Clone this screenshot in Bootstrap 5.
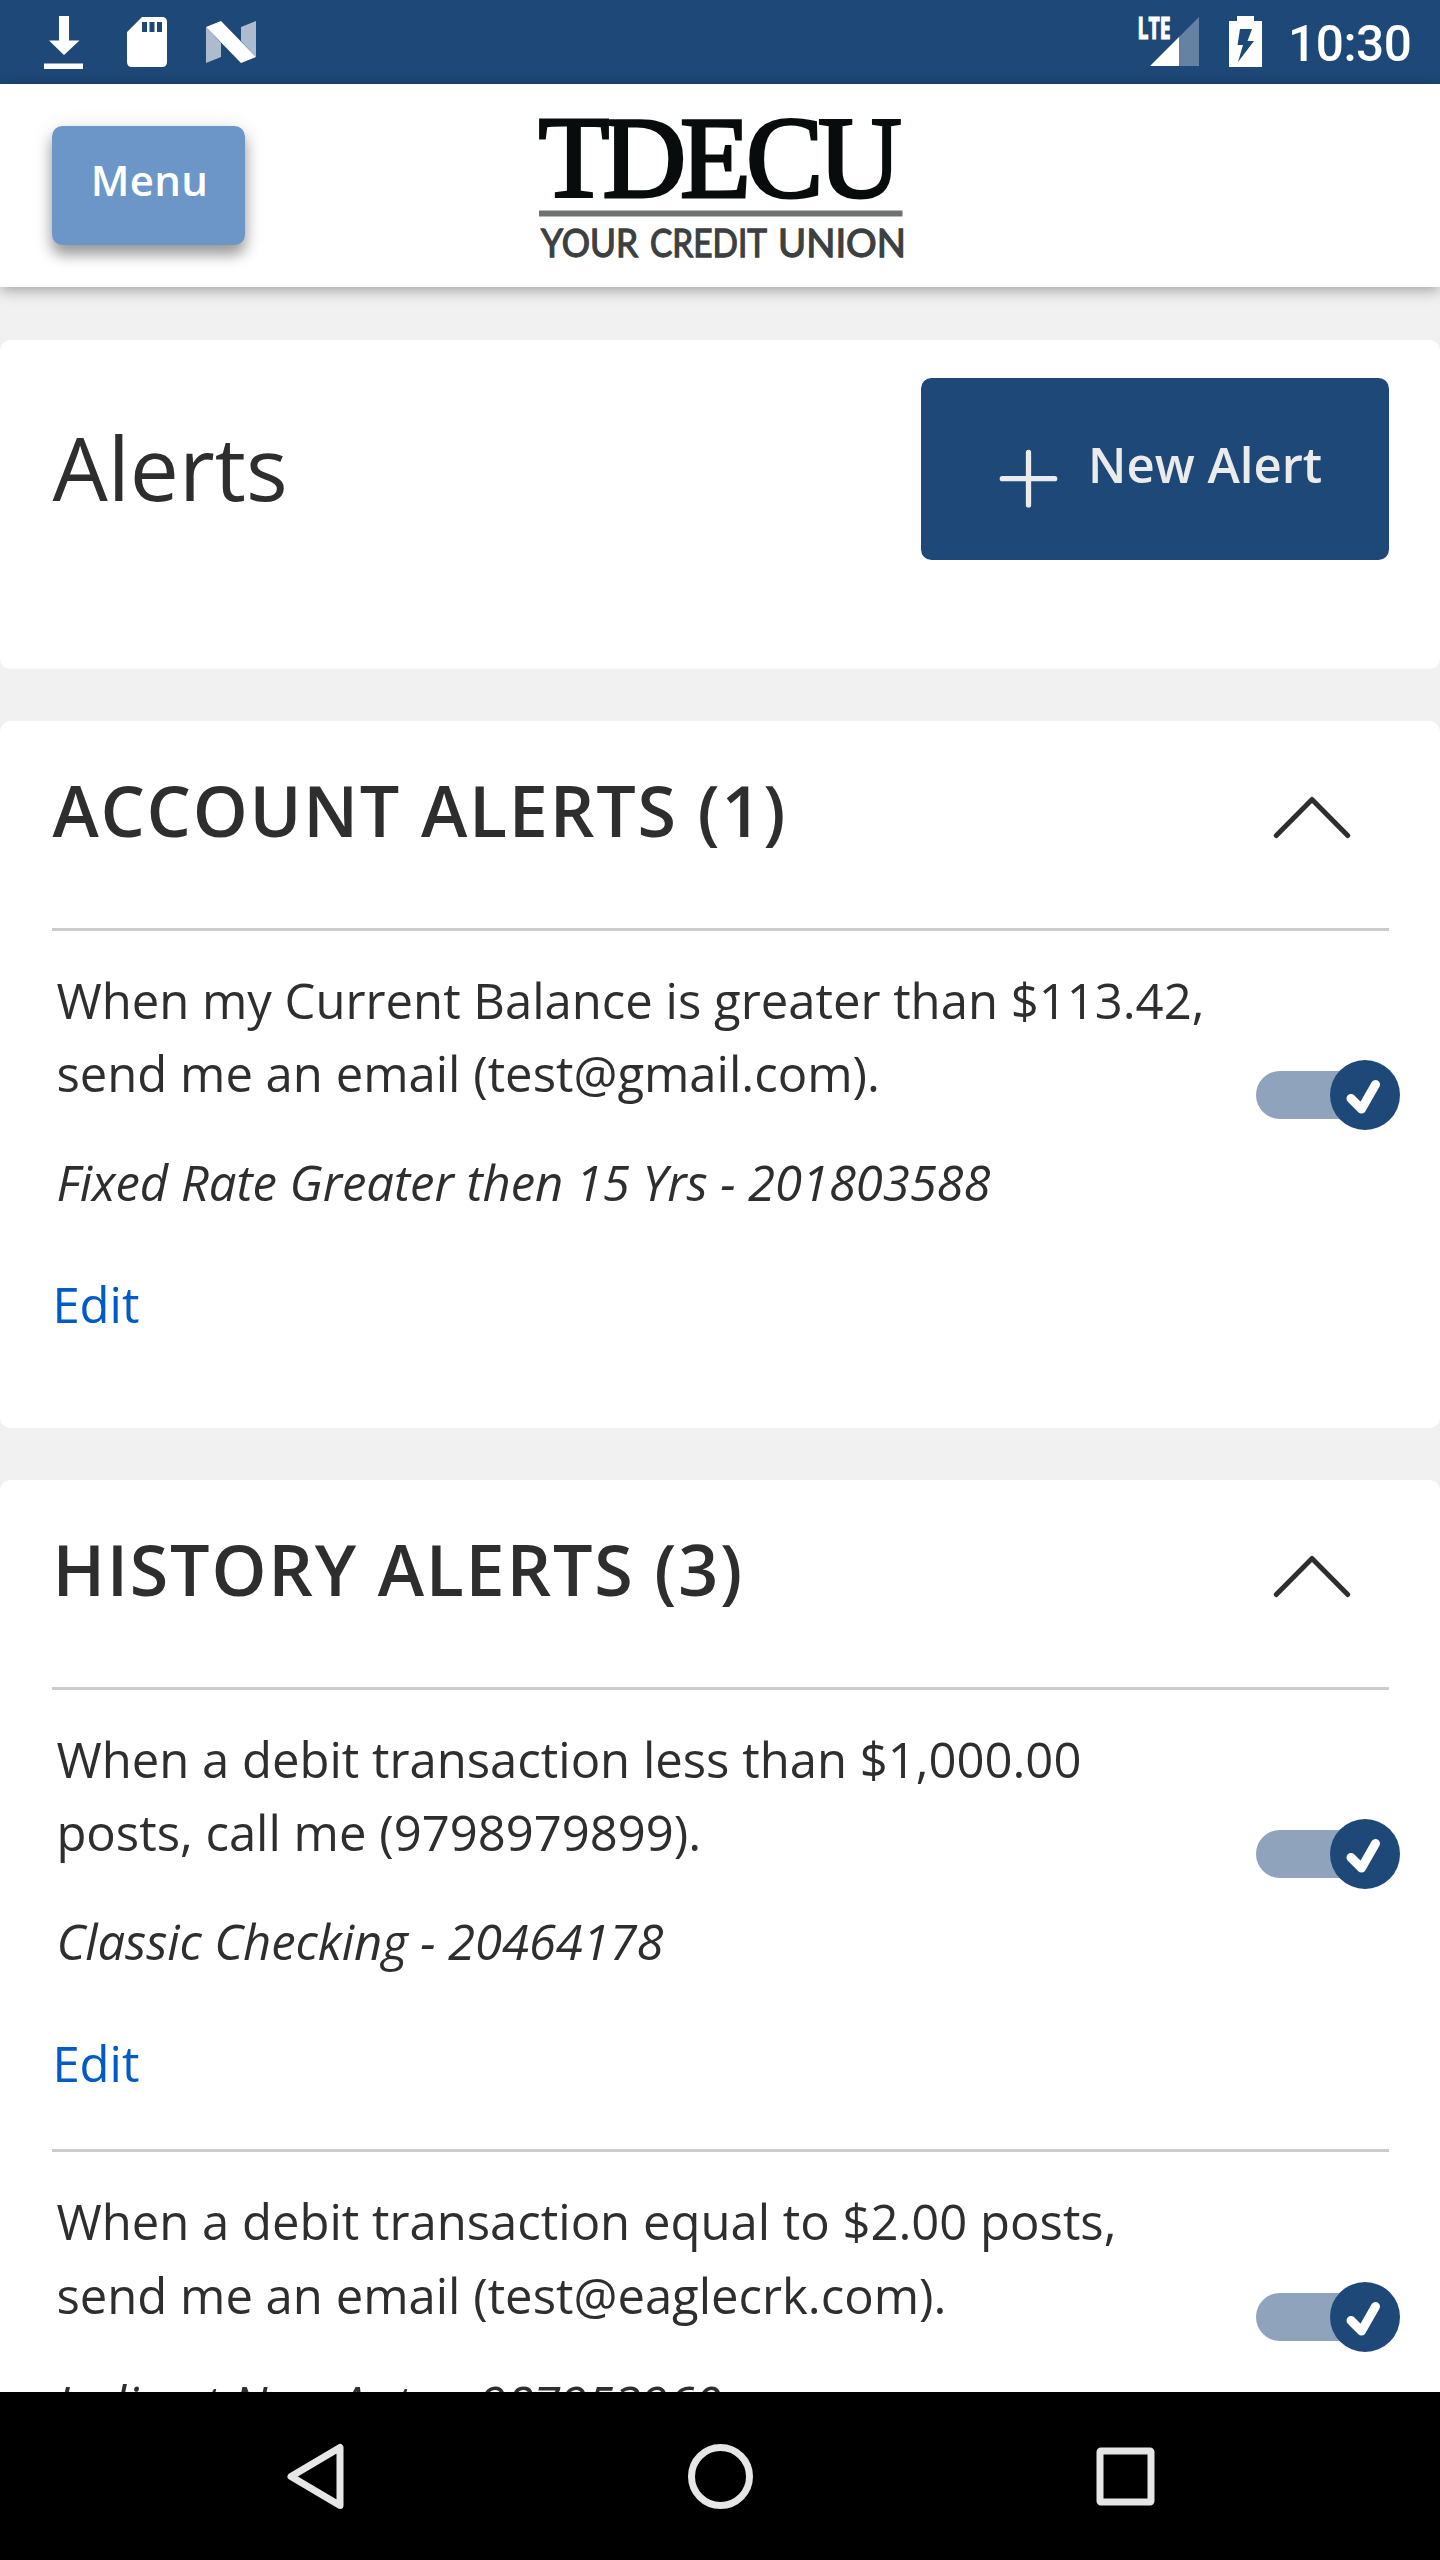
<!DOCTYPE html>
<html lang="en">
<head>
<meta charset="utf-8">
<meta name="viewport" content="width=device-width, initial-scale=1">
<title>Alerts</title>
<link href="https://cdn.jsdelivr.net/npm/bootstrap@5.3.0/dist/css/bootstrap.min.css" rel="stylesheet">
<style>
  html, body { height: 2560px; overflow: hidden; }
  body { font-family: "Open Sans", sans-serif; background: #f1f1f1; color: #2e2e2e; font-size: 49px; line-height: 73.5px; }
  svg { display: block; flex: none; }
  .status-bar { height: 84px; background: #1e4878; color: #fff; font-family: Roboto, sans-serif; }
  .clock { width: 152px; font-size: 49.5px; font-weight: 500; line-height: 88px; letter-spacing: -.4px; }
  .app-header { height: 203px; padding: 0 52px; background: #fff; box-shadow: 0 3px 14px rgba(0,0,0,.35); z-index: 1; }
  .btn-menu { width: 193px; height: 119px; margin-top: 42px; padding: 0 0 11px 2px; border: 0; border-radius: 10.5px; background: #6c96c8; color: #fff; font-size: 42px; font-weight: 600; letter-spacing: .3px; line-height: 108px; box-shadow: 0 10px 14px rgba(0,0,0,.35), 0 3px 22px rgba(0,0,0,.12); }
  .brand-art { margin-left: 284px; }
  .panel-card { border: 0; border-radius: 10.5px; background: #fff; color: inherit; padding: 0 52.4px; margin-top: 52.5px; }
  .title-card { height: 329px; }
  .page-title { font-size: 87.5px; font-weight: 400; line-height: 120px; margin: 67.5px 0 0; }
  .btn-new { width: 468.5px; height: 182px; margin: 38.5px -1.5px 0 0; border: 0; border-radius: 10.5px; background: #1e4878; color: #ebebeb; font-size: 49px; font-weight: 600; line-height: 74px; padding: 0; }
  .new-label { margin-top: 49px; }
  .section-head { height: 206.5px; }
  .section-head h2 { font-size: 70px; font-weight: 600; line-height: 96px; margin: 40.8px 0 0; letter-spacing: 1.75px; }
  .chevron-art { margin: 73.8px 35.2px 0 0; }
  .alert-item { border-top: 3.5px solid #ccc; height: 462.5px; margin-right: -1.5px; padding-top: 33.2px; }
  .alert-item.only-item { height: 500px; }
  .alert-item p { margin: 0 0 0 4px; }
  .alert-item .acct { font-style: italic; margin-top: 35px; letter-spacing: -.06px; }
  .edit-link { color: #005bc6; text-decoration: none; display: inline-block; margin-top: 48.8px; }
  .switch-art { margin: 96.8px -11px 0 0; }
  .nav-keys { height: 168px; background: #000; }
</style>
<script src="https://cdn.jsdelivr.net/npm/bootstrap@5.3.0/dist/js/bootstrap.bundle.min.js"></script>
</head>
<body class="d-flex flex-column">
<svg class="d-none" aria-hidden="true">
  <symbol id="toggle" viewBox="0 0 144 70">
    <path d="M24 11H110V59H24A24 24 0 0 1 24 11Z" fill="#8fa3bc"/>
    <circle cx="109" cy="35" r="35" fill="#1e4878"/>
    <path d="M95 38.5L105.500 49L119.500 24.500" fill="none" stroke="#fff" stroke-width="9" stroke-linecap="round" stroke-linejoin="round"/>
  </symbol>
  <symbol id="chevron" viewBox="0 0 80 44"><path d="M4.300 40.500L40 4.500L75.700 40.500" fill="none" stroke="#2e2e2e" stroke-width="5" stroke-linecap="round" stroke-linejoin="round"/></symbol>
</svg>

<div class="status-bar d-flex flex-shrink-0 justify-content-between">
  <svg width="280" height="84" fill="#fff" role="img" aria-label="Notifications">
    <path d="M59 16H69V40.500H79.500L64 55L49 40.500H59ZM44 63.500H83V69H44Z"/>
    <path fill-rule="evenodd" d="M142 17H162Q167 17 167 22V62Q167 67 162 67H132Q127 67 127 62V32ZM142 22V32H147V22ZM149.500 22V32H154.500V22ZM157 22V32H162V22Z"/>
    <path d="M206 27L221 43V57L206 63ZM241 27L256 21V57L241 41Z" opacity=".63"/>
    <path d="M206 27L221 21L256 57L241 63Z"/>
  </svg>
  <div class="d-flex">
    <svg width="150" height="84" fill="#fff" role="img" aria-label="LTE signal, battery charging">
      <text x="-.5" y="39" font-family="Open Sans" font-size="29.500" font-weight="700" stroke="#fff" stroke-width="1.200" textLength="33" lengthAdjust="spacingAndGlyphs">LTE</text>
      <path d="M12 66L41 37V66Z"/><path d="M41 37L61 17V66H41Z" opacity=".32"/>
      <path fill-rule="evenodd" d="M99 16H116V21H124V67H91V21H99ZM102 29L99.500 45H105L100 62L116 41H109.500L114 29Z"/>
    </svg>
    <div class="clock">10:30</div>
  </div>
</div>

<header class="app-header d-flex flex-shrink-0 position-relative">
  <button class="btn btn-menu" type="button">Menu</button>
  <svg class="brand-art" width="384" height="203" viewBox="-10 0 384 203" role="img" aria-label="TDECU Your Credit Union">
    <text x="-.5 63.500 141 207 279" y="113" font-family="Liberation Serif" font-size="116" fill="#080c0d" stroke="#080c0d" stroke-width="3">TDECU</text>
    <path d="M0 126.500H363.500V132.500H0Z" fill="#707272"/>
    <g font-family="Lato" font-size="38.500" fill="#3c4040" stroke="#3c4040" stroke-width="1.300">
      <text x="2" y="173" textLength="97" lengthAdjust="spacingAndGlyphs">YOUR</text>
      <text x="111" y="173" textLength="117" lengthAdjust="spacingAndGlyphs">CREDIT</text>
      <text x="239" y="173" textLength="128" lengthAdjust="spacingAndGlyphs">UNION</text>
    </g>
  </svg>
</header>

<main class="flex-grow-1 overflow-hidden">
  <section class="card panel-card title-card d-flex flex-row justify-content-between align-items-start">
    <h1 class="page-title">Alerts</h1>
    <button class="btn btn-new d-flex" type="button">
      <svg width="167.500" height="182" aria-hidden="true"><path d="M81.300 100.700H133.700M107.500 74.500V126.900" stroke="#ebebeb" stroke-width="5.300" stroke-linecap="round"/></svg>
      <span class="new-label">New Alert</span>
    </button>
  </section>

  <section class="card panel-card">
    <div class="section-head d-flex justify-content-between">
      <h2>ACCOUNT ALERTS (1)</h2>
      <svg class="chevron-art" width="80" height="44" aria-hidden="true"><use href="#chevron"/></svg>
    </div>
    <article class="alert-item only-item d-flex justify-content-between">
      <div>
        <p>When my Current Balance is greater than $113.42,<br>send me an email (test@gmail.com).</p>
        <p class="acct">Fixed Rate Greater then 15 Yrs - 201803588</p>
        <a href="#" class="edit-link">Edit</a>
      </div>
      <svg class="switch-art" width="144" height="70" role="img" aria-label="On"><use href="#toggle"/></svg>
    </article>
  </section>

  <section class="card panel-card">
    <div class="section-head d-flex justify-content-between">
      <h2>HISTORY ALERTS (3)</h2>
      <svg class="chevron-art" width="80" height="44" aria-hidden="true"><use href="#chevron"/></svg>
    </div>
    <article class="alert-item d-flex justify-content-between">
      <div>
        <p>When a debit transaction less than $1,000.00<br>posts, call me (9798979899).</p>
        <p class="acct">Classic Checking - 20464178</p>
        <a href="#" class="edit-link">Edit</a>
      </div>
      <svg class="switch-art" width="144" height="70" role="img" aria-label="On"><use href="#toggle"/></svg>
    </article>
    <article class="alert-item d-flex justify-content-between">
      <div>
        <p>When a debit transaction equal to $2.00 posts,<br>send me an email (test@eaglecrk.com).</p>
        <p class="acct">Indirect New Auto - 987953960</p>
      </div>
      <svg class="switch-art" width="144" height="70" role="img" aria-label="On"><use href="#toggle"/></svg>
    </article>
  </section>
</main>

<nav class="nav-keys flex-shrink-0 position-relative" aria-label="System">
  <svg width="1440" height="168" fill="none" stroke="#e6e6e6" stroke-width="7" stroke-linejoin="round">
    <path d="M291 84.500L340 55.500V113.500Z"/>
    <circle cx="720.500" cy="84.500" r="29"/>
    <rect x="1100" y="59" width="51" height="51" rx="1"/>
  </svg>
</nav>
</body>
</html>
